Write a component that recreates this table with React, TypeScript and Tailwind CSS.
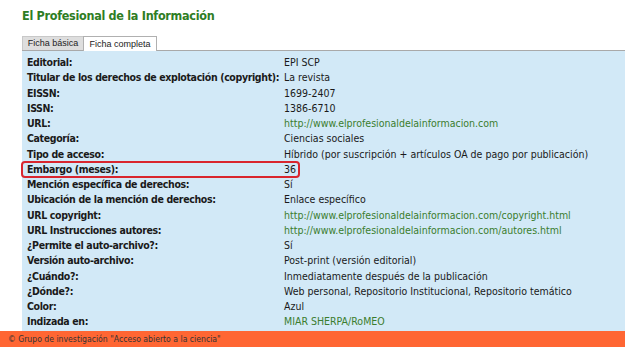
import React from "react";

type Row = { label: string; value: string; link?: boolean; hl?: boolean };

const rows: Row[] = [
  { label: "Editorial:", value: "EPI SCP" },
  { label: "Titular de los derechos de explotación (copyright):", value: "La revista" },
  { label: "EISSN:", value: "1699-2407" },
  { label: "ISSN:", value: "1386-6710" },
  { label: "URL:", value: "http://www.elprofesionaldelainformacion.com", link: true },
  { label: "Categoría:", value: "Ciencias sociales" },
  { label: "Tipo de acceso:", value: "Híbrido (por suscripción + artículos OA de pago por publicación)" },
  { label: "Embargo (meses):", value: "36", hl: true },
  { label: "Mención específica de derechos:", value: "Sí" },
  { label: "Ubicación de la mención de derechos:", value: "Enlace específico" },
  { label: "URL copyright:", value: "http://www.elprofesionaldelainformacion.com/copyright.html", link: true },
  { label: "URL Instrucciones autores:", value: "http://www.elprofesionaldelainformacion.com/autores.html", link: true },
  { label: "¿Permite el auto-archivo?:", value: "Sí" },
  { label: "Versión auto-archivo:", value: "Post-print (versión editorial)" },
  { label: "¿Cuándo?:", value: "Inmediatamente después de la publicación" },
  { label: "¿Dónde?:", value: "Web personal, Repositorio Institucional, Repositorio temático" },
  { label: "Color:", value: "Azul" },
  { label: "Indizada en:", value: "MIAR SHERPA/RoMEO", link: true },
];

const font = '"DejaVu Sans Condensed", "Liberation Sans", sans-serif';

export default function App() {
  return (
    <div className="w-[625px] h-[347px] bg-white flex flex-col overflow-hidden" style={{ fontFamily: font }}>
      <div className="pl-[22px] pt-[7px] h-[35px]">
        <h1 className="text-[12.5px] leading-[18px] font-bold tracking-[-0.3px] text-[#2e7d24]">El Profesional de la Información</h1>
      </div>
      <div className="pl-[22px] flex items-end h-[15px]" style={{ fontFamily: '"Liberation Sans", Arial, sans-serif' }}>
        <div className="h-[14px] w-[61px] text-center bg-[#dedede] border-t border-l border-[#c8c8c8] text-[9px] leading-[13px] text-[#222]">Ficha básica</div>
        <div className="h-[15px] w-[74px] text-center bg-white border-t border-l border-r border-[#b0b0b0] text-[9px] leading-[14px] text-[#222] relative top-[1px]">Ficha completa</div>
      </div>
      <div className="ml-[22px] flex-1 bg-[#d2e9f7] border-t border-[#a9a9a9] pt-[4px] pl-[5px]">
        {rows.map((r) => (
          <div key={r.label} className="relative grid grid-cols-[257px_1fr] h-[15.25px] text-[10.5px] leading-[15px] text-[#1a1a1a] whitespace-nowrap">
            <div className="font-bold tracking-[-0.36px]">{r.label}</div>
            <div className={r.link ? "text-[#3b7d2e]" : ""}>{r.value}</div>
            {r.hl && (
              <span className="absolute left-[-6px] top-[-1px] w-[279px] h-[17px] border-2 border-solid border-[#d9262e] rounded-[4px]" />
            )}
          </div>
        ))}
      </div>
      <div className="h-[16px] bg-[#ff6633] pl-[8px] text-[8.6px] leading-[16px] text-[#333]">
        © Grupo de investigación "Acceso abierto a la ciencia"
      </div>
    </div>
  );
}
